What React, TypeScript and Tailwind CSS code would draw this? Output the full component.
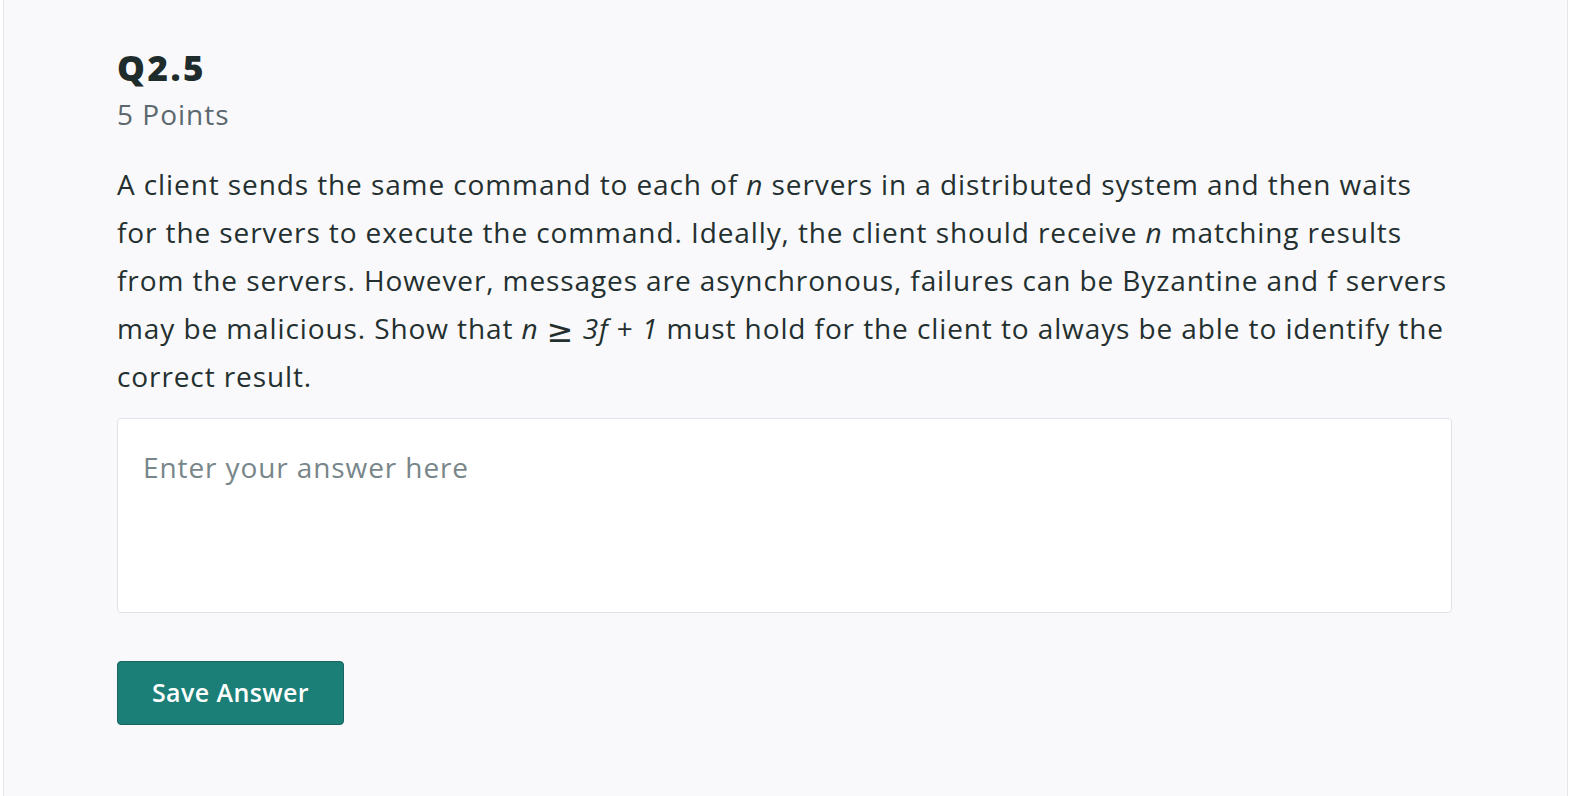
import React, { useState } from 'react';

const App: React.FC = () => {
  const [answer, setAnswer] = useState('');

  return (
    <div className="min-h-screen bg-white" style={{ fontFamily: '"Open Sans", "Noto Sans", sans-serif' }}>
      <div className="ml-[3px] mr-[4px] min-h-[796px] border-x border-[#e3e6eb] bg-[#f9f9fb] pl-[113px] pr-[115px] pt-[44px]">
        <h2 className="text-[35px] font-extrabold leading-[48px] tracking-[2.5px] text-[#1f2c2c]">Q2.5</h2>
        <div className="mt-[3px] text-[28px] leading-[38px] tracking-[1px] text-[#5c686e]">5 Points</div>

        <p className="mt-[27px] text-[28px] leading-[48px] tracking-[0.9px] text-[#24302f]">
          A client sends the same command to each of <i>n</i> servers in a distributed system and then waits<br />
          for the servers to execute the command. Ideally, the client should receive <i>n</i> matching results<br />
          from the servers. However, messages are asynchronous, failures can be Byzantine and f servers<br />
          may be malicious. Show that <i>n</i>{' '}
          <span className="inline-block translate-y-[3px] text-[32px] leading-none" style={{ fontFamily: '"DejaVu Sans", sans-serif' }}>≥</span>{' '}
          <i>3f</i> + <i>1</i> must hold for the client to always be able to identify the<br />
          correct result.
        </p>

        <textarea
          value={answer}
          onChange={(e) => setAnswer(e.target.value)}
          placeholder="Enter your answer here"
          className="mt-[18px] block h-[195px] w-full resize-none rounded-[4px] border border-[#dfe3e8] bg-white px-[25px] pt-[30px] text-[28px] leading-[36px] tracking-[0.9px] text-[#24302f] outline-none placeholder:text-[#78868a]"
        />

        <button
          type="button"
          className="mt-[48px] h-[64px] w-[227px] rounded-[4px] border border-[#17665f] bg-[#1c7f77] text-[25px] font-semibold tracking-[0.4px] text-white"
        >
          Save Answer
        </button>
      </div>
    </div>
  );
};

export default App;
